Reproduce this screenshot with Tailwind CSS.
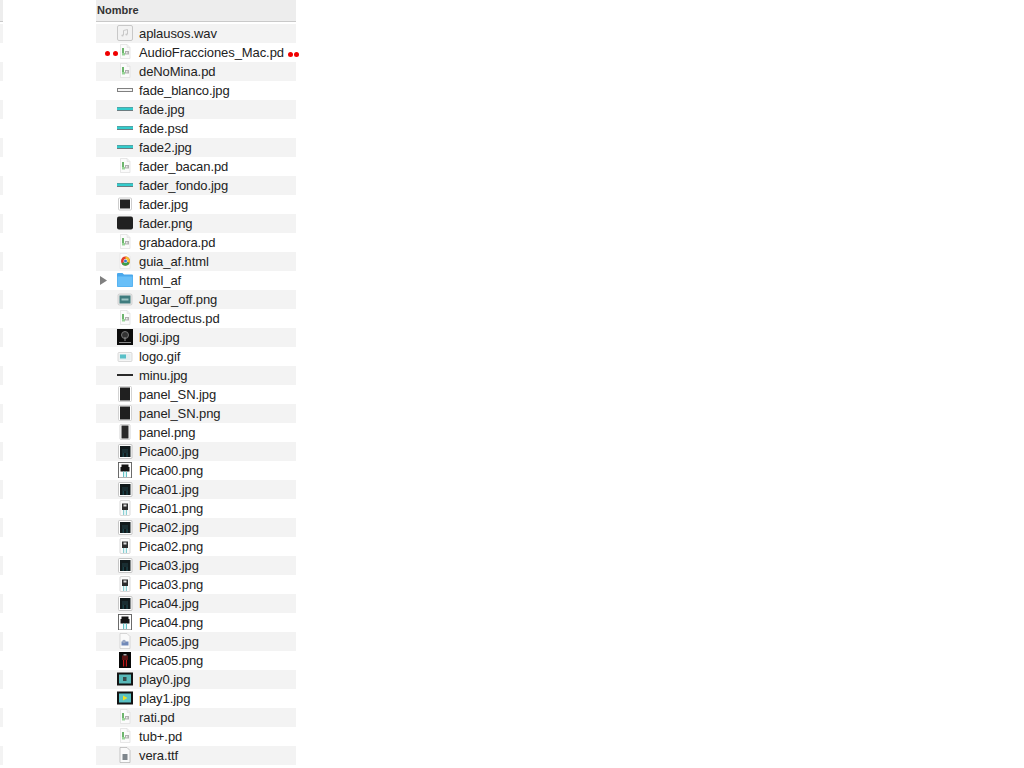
<!DOCTYPE html>
<html lang="en">
<head>
  <meta charset="UTF-8" />
  <title>Nombre</title>
  <script src="https://cdn.jsdelivr.net/npm/@tailwindcss/browser@4"></script>
</head>
<body class="bg-white h-screen overflow-hidden flex font-['Liberation_Sans',sans-serif] text-[13px] text-[#222]">
  <svg class="hidden">
    <symbol id="pd" viewBox="0 0 16 16"><path d="M3.500.5h6.500l3 3v11H3.500z" fill="#fbfbfb" stroke="#dcdcdc" stroke-width=".7"/><path d="M10 .5v3h3" fill="#eee" stroke="#dcdcdc" stroke-width=".5"/><path d="M5 4h2v7H5z" fill="#6db56d"/><path d="M5 9h3v2.500H5z" fill="#98d498"/><path d="M8 7h4v3.500H8z" fill="#b0b0b0"/><path d="M9 8h1.500v1.500H9z" fill="#ececec"/></symbol>
    <symbol id="wav" viewBox="0 0 16 16"><rect x=".5" y=".5" width="15" height="15" rx="1.500" fill="#f2f2f2" stroke="#c8c8c8"/><path d="M6.500 10V5.500l4-1V9" fill="none" stroke="#c8c8c8"/><circle cx="5.500" cy="10.500" r="1.100" fill="#c8c8c8"/><circle cx="9.500" cy="9.500" r="1.100" fill="#c8c8c8"/></symbol>
    <symbol id="fade" viewBox="0 0 16 16"><rect x="0" y="6" width="16" height="4" fill="#6c7c80"/><rect x="0" y="6.500" width="16" height="2.500" fill="#34cccc"/></symbol>
    <symbol id="blanco" viewBox="0 0 16 16"><rect x="0" y="6" width="16" height="4" fill="#808080"/><rect x="1" y="7" width="14" height="2" fill="#f6f6f6"/></symbol>
    <symbol id="minu" viewBox="0 0 16 16"><rect x="0" y="7" width="16" height="2" fill="#2a2a2a"/></symbol>
    <symbol id="faderj" viewBox="0 0 16 16"><rect x="1.500" y="2" width="13" height="12" rx="1" fill="#fff" stroke="#c0c0c0" stroke-width=".8"/><rect x="3" y="3.500" width="10" height="9" fill="#222"/></symbol>
    <symbol id="faderp" viewBox="0 0 16 16"><rect x="0" y="1.500" width="16" height="13" rx="2" fill="#202020"/></symbol>
    <symbol id="html" viewBox="0 0 16 16"><path d="M3 .5h7l3 3v12H3z" fill="#fafafa" stroke="#e0e0e0" stroke-width=".6"/><circle cx="8.500" cy="8" r="4.500" fill="#e33b2e"/><path d="M8.500 8V3.500a4.500 4.500 0 0 1 4 6.500z" fill="#f3c22c"/><path d="M8.500 8l4 2a4.500 4.500 0 0 1-8 .5z" fill="#3ca04a"/><circle cx="8.500" cy="8" r="2" fill="#fff"/><circle cx="8.500" cy="8" r="1.500" fill="#3a78d8"/></symbol>
    <symbol id="folder" viewBox="0 0 16 16"><path d="M0 2a1 1 0 0 1 1-1h4.500l1.500 1.500h8a1 1 0 0 1 1 1V14a1 1 0 0 1-1 1H1a1 1 0 0 1-1-1z" fill="#4aa8ec"/><path d="M.5 4.500h15V14a.5.5 0 0 1-.5.5H1a.5.5 0 0 1-.5-.5z" fill="#68bff8"/></symbol>
    <symbol id="jugar" viewBox="0 0 16 16"><rect x="1" y="3" width="14" height="11" rx="1.500" fill="#e8e8e8" stroke="#bcbcbc" stroke-width=".6"/><rect x="2.500" y="4.500" width="11" height="8" fill="#3f7c7e"/><rect x="4.500" y="7.500" width="7" height="2" fill="#9cc4c4"/></symbol>
    <symbol id="logi" viewBox="0 0 16 16"><rect width="16" height="16" fill="#0c0c0c"/><circle cx="8" cy="6" r="3.500" fill="#333" stroke="#777" stroke-width="1"/><path d="M8 8v4" stroke="#888"/><path d="M2 13.500h12" stroke="#8a8a8a"/></symbol>
    <symbol id="gif" viewBox="0 0 16 16"><rect x="1" y="4.500" width="14" height="9" rx="1" fill="#f6f6f6" stroke="#c4c4c4" stroke-width=".6"/><rect x="2.500" y="6" width="11" height="6" fill="#e4eef0"/><rect x="3" y="6.500" width="6" height="4" fill="#58c0c8"/></symbol>
    <symbol id="panel" viewBox="0 0 16 16"><rect x="1.500" y=".5" width="13" height="15" rx="1" fill="#fff" stroke="#c0c0c0" stroke-width=".7"/><rect x="3" y="1.500" width="10" height="13" fill="#202020"/></symbol>
    <symbol id="panelp" viewBox="0 0 16 16"><rect x="3" y=".5" width="10" height="15" rx="1" fill="#fff" stroke="#c0c0c0" stroke-width=".7"/><rect x="4.500" y="1.500" width="7" height="13" fill="#2a2a2a"/></symbol>
    <symbol id="picaj" viewBox="0 0 16 16"><rect x="1.500" y="1.500" width="13.500" height="14" rx="1" fill="#fff" stroke="#b8b8b8" stroke-width=".8"/><rect x="3" y="3" width="10.500" height="11" fill="#111a1c"/><path d="M5 6h6v4H5z" fill="#1a2e32"/><path d="M5.500 10h1.500v4H5.500zM9.300 10h1.500v4H9.300z" fill="#1c4248"/></symbol>
    <symbol id="picap" viewBox="0 0 16 16"><rect x="1.500" y=".5" width="13" height="15.500" fill="#fff" stroke="#5c5c5c" stroke-width=".9"/><path d="M4.500 2.500h7v2.500h1v4.500h-9V5h1z" fill="#141414"/><path d="M6 9.500h1.200V15H6zM8.800 9.500H10V15H8.800z" fill="#64c4c8"/></symbol>
    <symbol id="picas" viewBox="0 0 16 16"><rect x="3" y=".5" width="10" height="15" rx="1" fill="#fafafa" stroke="#c8c8c8" stroke-width=".7"/><rect x="5" y="3.500" width="6" height="6.500" fill="#2c2c2c"/><rect x="6.500" y="4.500" width="3" height="2" fill="#ddd"/><path d="M6 10h1.200v5H6zM8.800 10H10v5H8.800z" fill="#8ad0d4"/></symbol>
    <symbol id="pica5j" viewBox="0 0 16 16"><path d="M3 .5h7l3 3v12H3z" fill="#fafafa" stroke="#c8c8c8" stroke-width=".7"/><rect x="4.500" y="8.500" width="7" height="4" fill="#7088b8"/><circle cx="7" cy="8.500" r="1.800" fill="#9aa8c4"/></symbol>
    <symbol id="pica5p" viewBox="0 0 16 16"><rect x="2" y="0" width="12" height="16" fill="#080808"/><path d="M5 3.500h6V8H5z" fill="#5a1414"/><path d="M6 8h1.200v6.500H6zM8.800 8H10v6.500H8.800z" fill="#c01818"/><path d="M6.500 2h3v1.500h-3z" fill="#a8a8a8"/></symbol>
    <symbol id="play0" viewBox="0 0 16 16"><rect y="1.500" width="16" height="13" fill="#141414"/><rect x="2" y="3.500" width="12" height="9" fill="#58b8b8"/><path d="M6 6h3.500v4H6z" fill="#3a4a4a"/></symbol>
    <symbol id="play1" viewBox="0 0 16 16"><rect y="1.500" width="16" height="13" fill="#141414"/><rect x="2" y="3.500" width="12" height="9" fill="#58c0c4"/><path d="M6 5.500l4.500 2.500L6 10.500z" fill="#f0e020"/></symbol>
    <symbol id="ttf" viewBox="0 0 16 16"><path d="M3 .5h7l3 3v12H3z" fill="#fafafa" stroke="#b0b0b0" stroke-width=".7"/><rect x="5.500" y="7" width="5" height="6" fill="#7e868c"/></symbol>
  </svg>

  <!-- neighbouring column edge -->
  <div class="w-[3px] mr-[93px] flex flex-col">
    <div class="h-[22px] bg-[#ededed] border-b border-[#c9c9c9] shrink-0"></div>
    <div class="h-[2px] shrink-0"></div>
    <div class="flex-1 bg-[repeating-linear-gradient(#f3f3f3_0_19px,#fff_19px_38px)]"></div>
  </div>

  <!-- File list -->
  <div class="w-[200px] flex flex-col">
    <div class="h-[22px] bg-[#ededed] border-b border-[#c9c9c9] pl-px flex items-center text-[11px] font-bold text-[#333]">Nombre</div>
    <div class="h-[2px]"></div>
    <div class="relative flex-1 leading-[19px] tracking-[-0.08px] bg-[repeating-linear-gradient(#f3f3f3_0_19px,#fff_19px_38px)]">
      <div class="flex h-[19px] pl-[21px] gap-[6px]"><svg class="w-4 h-4 mt-px"><use href="#wav"/></svg>aplausos.wav</div>
      <div class="flex h-[19px] pl-[21px] gap-[6px]"><svg class="w-4 h-4 mt-px"><use href="#pd"/></svg>AudioFracciones_Mac.pd</div>
      <div class="flex h-[19px] pl-[21px] gap-[6px]"><svg class="w-4 h-4 mt-px"><use href="#pd"/></svg>deNoMina.pd</div>
      <div class="flex h-[19px] pl-[21px] gap-[6px]"><svg class="w-4 h-4 mt-px"><use href="#blanco"/></svg>fade_blanco.jpg</div>
      <div class="flex h-[19px] pl-[21px] gap-[6px]"><svg class="w-4 h-4 mt-px"><use href="#fade"/></svg>fade.jpg</div>
      <div class="flex h-[19px] pl-[21px] gap-[6px]"><svg class="w-4 h-4 mt-px"><use href="#fade"/></svg>fade.psd</div>
      <div class="flex h-[19px] pl-[21px] gap-[6px]"><svg class="w-4 h-4 mt-px"><use href="#fade"/></svg>fade2.jpg</div>
      <div class="flex h-[19px] pl-[21px] gap-[6px]"><svg class="w-4 h-4 mt-px"><use href="#pd"/></svg>fader_bacan.pd</div>
      <div class="flex h-[19px] pl-[21px] gap-[6px]"><svg class="w-4 h-4 mt-px"><use href="#fade"/></svg>fader_fondo.jpg</div>
      <div class="flex h-[19px] pl-[21px] gap-[6px]"><svg class="w-4 h-4 mt-px"><use href="#faderj"/></svg>fader.jpg</div>
      <div class="flex h-[19px] pl-[21px] gap-[6px]"><svg class="w-4 h-4 mt-px"><use href="#faderp"/></svg>fader.png</div>
      <div class="flex h-[19px] pl-[21px] gap-[6px]"><svg class="w-4 h-4 mt-px"><use href="#pd"/></svg>grabadora.pd</div>
      <div class="flex h-[19px] pl-[21px] gap-[6px]"><svg class="w-4 h-4 mt-px"><use href="#html"/></svg>guia_af.html</div>
      <div class="flex h-[19px] pl-[4px] gap-[6px]"><svg class="w-[7px] h-[9px] mt-[5px] mr-[4px]" viewBox="0 0 7 9"><path d="M0 0l7 4.500L0 9z" fill="#808080"/></svg><svg class="w-4 h-4 mt-px"><use href="#folder"/></svg>html_af</div>
      <div class="flex h-[19px] pl-[21px] gap-[6px]"><svg class="w-4 h-4 mt-px"><use href="#jugar"/></svg>Jugar_off.png</div>
      <div class="flex h-[19px] pl-[21px] gap-[6px]"><svg class="w-4 h-4 mt-px"><use href="#pd"/></svg>latrodectus.pd</div>
      <div class="flex h-[19px] pl-[21px] gap-[6px]"><svg class="w-4 h-4 mt-px"><use href="#logi"/></svg>logi.jpg</div>
      <div class="flex h-[19px] pl-[21px] gap-[6px]"><svg class="w-4 h-4 mt-px"><use href="#gif"/></svg>logo.gif</div>
      <div class="flex h-[19px] pl-[21px] gap-[6px]"><svg class="w-4 h-4 mt-px"><use href="#minu"/></svg>minu.jpg</div>
      <div class="flex h-[19px] pl-[21px] gap-[6px]"><svg class="w-4 h-4 mt-px"><use href="#panel"/></svg>panel_SN.jpg</div>
      <div class="flex h-[19px] pl-[21px] gap-[6px]"><svg class="w-4 h-4 mt-px"><use href="#panel"/></svg>panel_SN.png</div>
      <div class="flex h-[19px] pl-[21px] gap-[6px]"><svg class="w-4 h-4 mt-px"><use href="#panelp"/></svg>panel.png</div>
      <div class="flex h-[19px] pl-[21px] gap-[6px]"><svg class="w-4 h-4 mt-px"><use href="#picaj"/></svg>Pica00.jpg</div>
      <div class="flex h-[19px] pl-[21px] gap-[6px]"><svg class="w-4 h-4 mt-px"><use href="#picap"/></svg>Pica00.png</div>
      <div class="flex h-[19px] pl-[21px] gap-[6px]"><svg class="w-4 h-4 mt-px"><use href="#picaj"/></svg>Pica01.jpg</div>
      <div class="flex h-[19px] pl-[21px] gap-[6px]"><svg class="w-4 h-4 mt-px"><use href="#picas"/></svg>Pica01.png</div>
      <div class="flex h-[19px] pl-[21px] gap-[6px]"><svg class="w-4 h-4 mt-px"><use href="#picaj"/></svg>Pica02.jpg</div>
      <div class="flex h-[19px] pl-[21px] gap-[6px]"><svg class="w-4 h-4 mt-px"><use href="#picas"/></svg>Pica02.png</div>
      <div class="flex h-[19px] pl-[21px] gap-[6px]"><svg class="w-4 h-4 mt-px"><use href="#picaj"/></svg>Pica03.jpg</div>
      <div class="flex h-[19px] pl-[21px] gap-[6px]"><svg class="w-4 h-4 mt-px"><use href="#picas"/></svg>Pica03.png</div>
      <div class="flex h-[19px] pl-[21px] gap-[6px]"><svg class="w-4 h-4 mt-px"><use href="#picaj"/></svg>Pica04.jpg</div>
      <div class="flex h-[19px] pl-[21px] gap-[6px]"><svg class="w-4 h-4 mt-px"><use href="#picap"/></svg>Pica04.png</div>
      <div class="flex h-[19px] pl-[21px] gap-[6px]"><svg class="w-4 h-4 mt-px"><use href="#pica5j"/></svg>Pica05.jpg</div>
      <div class="flex h-[19px] pl-[21px] gap-[6px]"><svg class="w-4 h-4 mt-px"><use href="#pica5p"/></svg>Pica05.png</div>
      <div class="flex h-[19px] pl-[21px] gap-[6px]"><svg class="w-4 h-4 mt-px"><use href="#play0"/></svg>play0.jpg</div>
      <div class="flex h-[19px] pl-[21px] gap-[6px]"><svg class="w-4 h-4 mt-px"><use href="#play1"/></svg>play1.jpg</div>
      <div class="flex h-[19px] pl-[21px] gap-[6px]"><svg class="w-4 h-4 mt-px"><use href="#pd"/></svg>rati.pd</div>
      <div class="flex h-[19px] pl-[21px] gap-[6px]"><svg class="w-4 h-4 mt-px"><use href="#pd"/></svg>tub+.pd</div>
      <div class="flex h-[19px] pl-[21px] gap-[6px]"><svg class="w-4 h-4 mt-px"><use href="#ttf"/></svg>vera.ttf</div>

      <!-- red marks around the AudioFracciones row -->
      <span class="absolute left-[9px] top-[27px] w-[5px] h-[5px] rounded-full bg-[#f00000]"></span>
      <span class="absolute left-[17px] top-[27px] w-[5px] h-[5px] rounded-full bg-[#f00000]"></span>
      <span class="absolute left-[192px] top-[28px] w-[5px] h-[5px] rounded-full bg-[#f00000]"></span>
      <span class="absolute left-[198px] top-[28px] w-[5px] h-[5px] rounded-full bg-[#f00000]"></span>
    </div>
  </div>
</body>
</html>
